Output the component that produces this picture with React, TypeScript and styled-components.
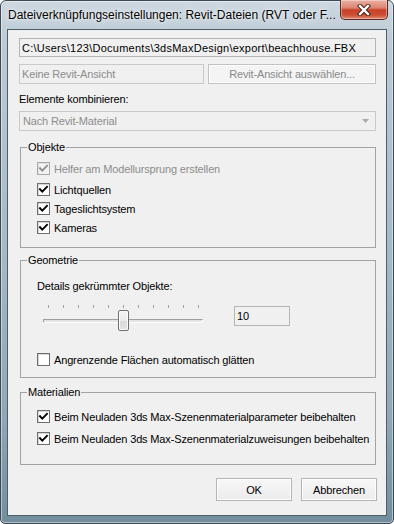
import React from "react";
import styled, { createGlobalStyle } from "styled-components";

const GlobalStyle = createGlobalStyle`
  html, body {
    margin: 0;
    padding: 0;
    background: #ffffff;
  }
  body {
    width: 394px;
    height: 524px;
    overflow: hidden;
    font-family: "Liberation Sans", Arial, sans-serif;
    font-size: 11px;
    letter-spacing: -0.15px;
    color: #000;
  }
  * { box-sizing: border-box; }
`;

const Window = styled.div`
  width: 394px;
  height: 524px;
  display: flex;
  flex-direction: column;
  border: 1px solid #3d4a54;
  border-radius: 6px 6px 5px 5px;
  padding: 0 6px 7px 6px;
  background: linear-gradient(180deg, #cdd8e1 0%, #bccad5 8%, #a7bac8 45%, #8fa7b6 80%, #728e9d 100%);
  box-shadow: inset 0 0 0 1px rgba(255, 255, 255, 0.45);
`;

const TitleBar = styled.div`
  height: 28px;
  display: flex;
  align-items: flex-start;
  justify-content: space-between;
`;

const TitleText = styled.span`
  padding: 7px 0 0 1px;
  font-family: "Liberation Sans", Arial, sans-serif;
  font-size: 12px;
  letter-spacing: 0;
  line-height: 15px;
  color: #000;
  white-space: nowrap;
  text-shadow: 0 0 6px rgba(255, 255, 255, 0.95), 0 0 2px rgba(255, 255, 255, 0.9);
`;

const CloseButton = styled.div`
  width: 48px;
  height: 20px;
  margin: -1px -1px 0 0;
  display: flex;
  align-items: center;
  justify-content: center;
  border: 1px solid #5b2b22;
  border-top: none;
  border-radius: 0 0 5px 5px;
  background: linear-gradient(180deg, #eab0a3 0%, #dd8371 42%, #c7432b 52%, #cc4d33 78%, #e08a74 100%);
  box-shadow: inset 0 0 0 1px rgba(255, 255, 255, 0.35);
`;

const Client = styled.div`
  flex: 1;
  display: flex;
  flex-direction: column;
  padding: 8px 10px 0 11px;
  border: 1px solid #4e5f6a;
  background: #f0f0f0;
`;

const TextBox = styled.div<{ $disabled?: boolean; $width?: number; $spacing?: number }>`
  height: ${(p) => (p.$disabled ? 20 : 19)}px;
  ${(p) => (p.$width ? `width: ${p.$width}px; flex: none;` : "")}
  display: flex;
  align-items: center;
  padding-left: 2px;
  border: 1px solid ${(p) => (p.$disabled ? "#c9c9c9" : "#b5b5b5")};
  background: #f0f0f0;
  color: ${(p) => (p.$disabled ? "#8d8d8d" : "#000")};
  letter-spacing: ${(p) => p.$spacing ?? -0.15}px;
  white-space: nowrap;
  overflow: hidden;
`;

const Row = styled.div`
  display: flex;
  gap: 4px;
  margin-top: 7px;
`;

const PushButton = styled.div<{ $disabled?: boolean; $width?: number }>`
  ${(p) => (p.$width ? `width: ${p.$width}px;` : "flex: 1;")}
  height: ${(p) => (p.$disabled ? 20 : 23)}px;
  display: flex;
  align-items: center;
  justify-content: center;
  border: 1px solid ${(p) => (p.$disabled ? "#c3c3c3" : "#b4b4b4")};
  background: ${(p) => (p.$disabled ? "#f4f4f4" : "linear-gradient(180deg, #f7f7f7 0%, #ececec 100%)")};
  box-shadow: inset 0 0 0 1px #fdfdfd;
  color: ${(p) => (p.$disabled ? "#8a8a8a" : "#000")};
`;

const Label = styled.div<{ $top: number }>`
  margin-top: ${(p) => p.$top}px;
  line-height: 13px;
`;

const Dropdown = styled.div`
  height: 20px;
  margin-top: 5px;
  display: flex;
  align-items: center;
  justify-content: space-between;
  padding: 0 6px 0 3px;
  border: 1px solid #c9c9c9;
  background: #f0f0f0;
  color: #8d8d8d;
`;

const Group = styled.fieldset<{ $top: number }>`
  margin: ${(p) => p.$top}px 0 0 1px;
  padding: 0 0 0 6px;
  min-width: 0;
  border: 1px solid #a3a3a3;
`;

const Legend = styled.legend`
  padding: 0 1px;
  line-height: 13px;
  font-size: 11px;
`;

const GroupBody = styled.div<{ $top: number; $bottom: number }>`
  display: flex;
  flex-direction: column;
  padding: ${(p) => p.$top}px 0 ${(p) => p.$bottom}px 10px;
`;

const CheckRow = styled.div<{ $after?: number; $before?: number; $disabled?: boolean }>`
  height: 19px;
  display: flex;
  align-items: center;
  gap: 4px;
  margin-top: ${(p) => p.$before ?? 0}px;
  margin-bottom: ${(p) => p.$after ?? 0}px;
  color: ${(p) => (p.$disabled ? "#8d8d8d" : "#000")};
  white-space: nowrap;
`;

const Box = styled.span<{ $disabled?: boolean }>`
  width: 13px;
  height: 13px;
  flex: none;
  display: flex;
  align-items: center;
  justify-content: center;
  border: 1px solid ${(p) => (p.$disabled ? "#a8a8a8" : "#6f6f6f")};
  background: ${(p) => (p.$disabled ? "#f2f2f2" : "#ffffff")};
  box-shadow: inset 1px 1px 0 ${(p) => (p.$disabled ? "#e0e0e0" : "#d6d6d6")};
`;

const Check = ({ checked, disabled }: { checked: boolean; disabled?: boolean }) => (
  <Box $disabled={disabled}>
    {checked && (
      <svg width="11" height="11" viewBox="0 0 11 11">
        <polyline
          points="2,5.2 4.3,7.6 9,2.8"
          fill="none"
          stroke={disabled ? "#8f8f8f" : "#000"}
          strokeWidth="1.9"
          strokeLinecap="square"
        />
      </svg>
    )}
  </Box>
);

const CheckItem = ({
  label,
  checked,
  disabled,
  before,
  after,
}: {
  label: string;
  checked: boolean;
  disabled?: boolean;
  before?: number;
  after?: number;
}) => (
  <CheckRow $before={before} $after={after} $disabled={disabled}>
    <Check checked={checked} disabled={disabled} />
    <span>{label}</span>
  </CheckRow>
);

const SliderRow = styled.div`
  display: flex;
  align-items: flex-start;
  margin-top: 12px;
`;

const Slider = styled.div`
  position: relative;
  width: 160px;
  height: 26px;
  margin-left: 6px;
`;

const Ticks = styled.div`
  height: 4px;
  display: flex;
  justify-content: space-between;
  padding: 0 4px 0 5px;
`;

const Tick = styled.span`
  width: 1px;
  height: 3px;
  background: #a4a4a4;
`;

const Track = styled.div`
  height: 4px;
  margin-top: 10px;
  border: 1px solid;
  border-color: #9f9f9f #ffffff #ffffff #9f9f9f;
  background: #e4e4e4;
`;

const Thumb = styled.div`
  position: absolute;
  top: 5px;
  width: 11px;
  height: 21px;
  border: 1px solid #6f6f6f;
  border-radius: 2px;
  background: linear-gradient(180deg, #f4f4f4 0%, #ebebeb 50%, #d9d9d9 51%, #e2e2e2 100%);
  box-shadow: inset 0 0 0 1px #fbfbfb;
`;

const NumberBox = styled.div`
  width: 56px;
  height: 20px;
  margin: 1px 0 0 31px;
  display: flex;
  align-items: center;
  padding-left: 2px;
  border: 1px solid #b5b5b5;
  background: #f0f0f0;
`;

const ButtonRow = styled.div`
  display: flex;
  justify-content: flex-end;
  gap: 9px;
  margin: 13px -1px 0 0;
`;

const tickCount = 11;
const sliderValue = 5;

export default function App() {
  return (
    <>
      <GlobalStyle />
      <Window>
        <TitleBar>
          <TitleText>Dateiverknüpfungseinstellungen: Revit-Dateien (RVT oder F...</TitleText>
          <CloseButton>
            <svg width="14" height="12" viewBox="0 0 14 12">
              <path d="M3 2 L11 10 M11 2 L3 10" stroke="#3a1a14" strokeWidth="4.2" strokeLinecap="square" />
              <path d="M3 2 L11 10 M11 2 L3 10" stroke="#ffffff" strokeWidth="2.4" strokeLinecap="square" />
            </svg>
          </CloseButton>
        </TitleBar>
        <Client>
          <TextBox $spacing={0.25}>C:\Users\123\Documents\3dsMaxDesign\export\beachhouse.FBX</TextBox>
          <Row>
            <TextBox $disabled $width={185}>Keine Revit-Ansicht</TextBox>
            <PushButton $disabled>Revit-Ansicht auswählen...</PushButton>
          </Row>
          <Label $top={9}>Elemente kombinieren:</Label>
          <Dropdown>
            <span>Nach Revit-Material</span>
            <svg width="7" height="4" viewBox="0 0 7 4">
              <path d="M0 0 L7 0 L3.5 4 Z" fill="#a9a9a9" />
            </svg>
          </Dropdown>

          <Group $top={10}>
            <Legend>Objekte</Legend>
            <GroupBody $top={5} $bottom={10}>
              <CheckItem label="Helfer am Modellursprung erstellen" checked disabled after={2} />
              <CheckItem label="Lichtquellen" checked />
              <CheckItem label="Tageslichtsystem" checked />
              <CheckItem label="Kameras" checked />
            </GroupBody>
          </Group>

          <Group $top={6}>
            <Legend>Geometrie</Legend>
            <GroupBody $top={13} $bottom={8}>
              <Label $top={0}>Details gekrümmter Objekte:</Label>
              <SliderRow>
                <Slider>
                  <Ticks>
                    {Array.from({ length: tickCount }, (_, i) => (
                      <Tick key={i} />
                    ))}
                  </Ticks>
                  <Track />
                  <Thumb style={{ left: 5 + sliderValue * 15 - 5 }} />
                </Slider>
                <NumberBox>10</NumberBox>
              </SliderRow>
              <CheckItem label="Angrenzende Flächen automatisch glätten" checked={false} before={19} />
            </GroupBody>
          </Group>

          <Group $top={8}>
            <Legend>Materialien</Legend>
            <GroupBody $top={8} $bottom={16}>
              <CheckItem label="Beim Neuladen 3ds Max-Szenenmaterialparameter beibehalten" checked after={3} />
              <CheckItem label="Beim Neuladen 3ds Max-Szenenmaterialzuweisungen beibehalten" checked />
            </GroupBody>
          </Group>

          <ButtonRow>
            <PushButton $width={76}>OK</PushButton>
            <PushButton $width={76}>Abbrechen</PushButton>
          </ButtonRow>
        </Client>
      </Window>
    </>
  );
}
